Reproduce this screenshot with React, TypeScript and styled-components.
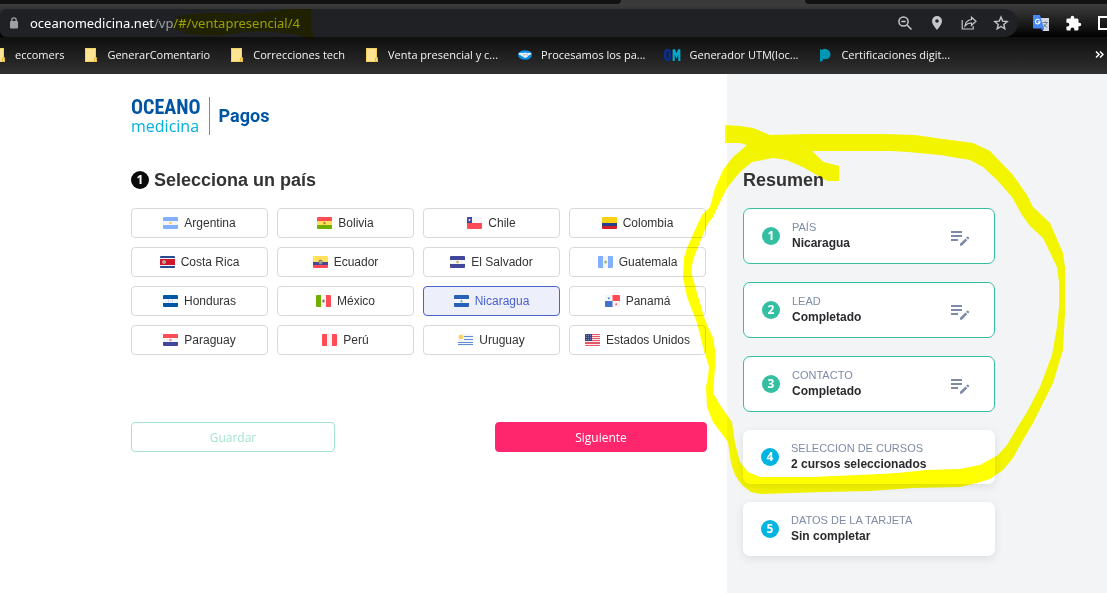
import React from 'react';
import styled, { createGlobalStyle } from 'styled-components';

const GlobalStyle = createGlobalStyle`
  * { box-sizing: border-box; }
  body {
    margin: 0;
    background: #fff;
    color: #333;
    font: 12px/16px "Liberation Sans", Arial, sans-serif;
  }
  button { font: inherit; cursor: pointer; }
  h1, h2, p { margin: 0; }
`;

const UI_FONT = '"Open Sans", "Noto Sans", sans-serif';

const Page = styled.div`
  position: relative;
  min-height: 100vh;
  display: flex;
  flex-direction: column;
  overflow: hidden;
`;

/* ---------- browser chrome ---------- */

const Chrome = styled.header`
  font-family: ${UI_FONT};
  color: #e8eaed;
`;

const TabStrip = styled.div`
  display: flex;
  height: 4px;
  background: #3a3a3a;
`;

const TabsBefore = styled.div`
  flex: 0 0 621px;
  background: #121212;
  border-bottom-right-radius: 4px;
`;

const TabsAfter = styled.div`
  flex: 1;
  margin-left: 184px;
  background: #121212;
  border-bottom-left-radius: 4px;
`;

const Toolbar = styled.div`
  display: flex;
  align-items: center;
  height: 33px;
  padding-top: 5px;
  background: linear-gradient(#3c3c3c, #2c2c2c 30%, #0a0a0a 85%, #000);
`;

const AddressBar = styled.div`
  flex: 1;
  display: flex;
  align-items: center;
  height: 28px;
  padding: 0 1px 0 10px;
  background: #202124;
  border-radius: 6px 14px 14px 6px;
`;

const Url = styled.div`
  flex: 1;
  margin-left: 12px;
  font: 13px/18px "Noto Sans", sans-serif;
  color: #9aa0a6;
  b { font-weight: 400; color: #fff; }
`;

const IconButton = styled.button`
  flex: none;
  display: flex;
  align-items: center;
  justify-content: center;
  width: 32px;
  height: 28px;
  padding: 0;
  border: 0;
  background: none;
  color: #c4c7c9;
`;

const BarIcons = styled.div`
  display: flex;
`;

const Extensions = styled.div`
  display: flex;
  width: 89px;
  padding-left: 7px;
  overflow: hidden;
`;

const Bookmarks = styled.nav`
  display: flex;
  align-items: center;
  height: 37px;
  padding-bottom: 2px;
  background: linear-gradient(#0f0f0f, #303030);
  overflow: hidden;
`;

const BookmarkList = styled.div`
  flex: 1;
  display: flex;
  gap: 19px;
  margin-left: -9px;
`;

const Bookmark = styled.a`
  display: flex;
  align-items: center;
  gap: 8px;
  font-size: 11px;
  color: #f1f3f4;
  text-decoration: none;
  white-space: nowrap;
  svg { flex: none; }
`;

const More = styled.button`
  padding: 0 3px;
  border: 0;
  background: none;
  color: #fff;
  display: flex;
`;

/* ---------- page ---------- */

const Body = styled.div`
  flex: 1;
  display: flex;
`;

const Main = styled.main`
  flex: 1;
  padding: 20px 20px 20px 16px;
`;

const Content = styled.div`
  max-width: 576px;
  margin-left: auto;
`;

const Brand = styled.div`
  display: flex;
  align-items: center;
  height: 44px;
`;

const Logo = styled.div`
  display: flex;
  flex-direction: column;
  height: 38px;
  padding-right: 8px;
  border-right: 1px solid #8a8a8a;
`;

const LogoTop = styled.span`
  font: 700 20px/20px "Roboto Condensed", "Liberation Sans Narrow", "Liberation Sans", sans-serif;
  color: #0054a4;
`;

const LogoBottom = styled.span`
  font: 500 16px/18px "Open Sans", "Noto Sans", sans-serif;
  color: #00b2dc;
`;

const Product = styled.span`
  margin-left: 9px;
  font: 700 18px/24px Roboto, sans-serif;
  color: #0054a4;
`;

const Title = styled.h1`
  display: flex;
  align-items: center;
  gap: 5px;
  margin: 30px 0 16px;
  font-size: 18px;
  line-height: 24px;
`;

const Badge = styled.span<{ $color: string }>`
  flex: none;
  width: 18px;
  height: 18px;
  border-radius: 50%;
  background: ${(p) => p.$color};
  color: #fff;
  font: 700 12px/18px ${UI_FONT};
  text-align: center;
`;

const CountryGrid = styled.div`
  display: grid;
  grid-template-columns: repeat(4, 1fr);
  gap: 9px;
  max-width: 575px;
`;

const CountryButton = styled.button<{ $selected?: boolean }>`
  display: flex;
  align-items: center;
  justify-content: center;
  gap: 6px;
  height: 30px;
  padding: 0;
  border: 1px solid ${(p) => (p.$selected ? '#4a62cc' : '#d9d9d9')};
  border-radius: 4px;
  background: ${(p) => (p.$selected ? '#edf0fa' : '#fff')};
  color: ${(p) => (p.$selected ? '#4a62cc' : '#333')};
`;

const Actions = styled.div`
  display: flex;
  justify-content: space-between;
  margin-top: 67px;
`;

const ActionButton = styled.button<{ $primary?: boolean }>`
  width: ${(p) => (p.$primary ? '212px' : '204px')};
  height: 30px;
  padding: 1px 0 0;
  border: 1px solid ${(p) => (p.$primary ? '#ff266e' : '#a3e4cf')};
  border-radius: 4px;
  background: ${(p) => (p.$primary ? '#ff266e' : '#fff')};
  color: ${(p) => (p.$primary ? '#fff' : '#a3e4cf')};
  font-family: ${UI_FONT};
`;

const Aside = styled.aside`
  flex: 0 0 380px;
  padding: 94px 16px 20px;
  background: #f3f4f6;
`;

const AsideTitle = styled.h2`
  margin-bottom: 16px;
  font-size: 18px;
  line-height: 24px;
`;

const Steps = styled.div`
  display: flex;
  flex-direction: column;
  gap: 18px;
  width: 252px;
`;

const Step = styled.section<{ $done: boolean }>`
  display: flex;
  align-items: center;
  height: ${(p) => (p.$done ? '56px' : '54px')};
  padding: 0 ${(p) => (p.$done ? '16px' : '18px')} 0 18px;
  border-radius: 7px;
  background: #fff;
  ${(p) => (p.$done ? 'border: 1px solid #34bfa3;' : 'box-shadow: 0 3px 10px rgba(0, 0, 0, 0.09);')}
`;

const StepText = styled.div`
  flex: 1;
  margin-left: 12px;
  padding-bottom: 2px;
`;

const StepLabel = styled.p`
  font-size: 11px;
  line-height: 16px;
  color: #7e8ba5;
`;

const StepValue = styled.p`
  font-weight: 700;
  line-height: 16px;
  color: #2b2b2f;
`;

const EditButton = styled.button`
  display: flex;
  padding: 6px 8px 0;
  border: 0;
  background: none;
`;

const Marker = styled.svg<{ $side: 'left' | 'right'; $top: number }>`
  position: absolute;
  top: ${(p) => p.$top}px;
  ${(p) => p.$side}: 0;
  mix-blend-mode: multiply;
  pointer-events: none;
`;

/* ---------- drawings ---------- */

const Folder = () => (
  <svg width="16" height="16" viewBox="0 0 16 16">
    <path d="M2 1h11v9.500h1V15H2z" fill="#ffe494" />
    <path d="M2.500 1.500h10V11M2.500 1.500v13H11" fill="none" stroke="#f3cf5c" />
    <path d="M11.500 14.500v-3.500h2v3.500z" fill="#ffe494" stroke="#e9bb3c" />
  </svg>
);

const Handshake = () => (
  <svg width="16" height="16" viewBox="0 0 16 16">
    <ellipse cx="8" cy="8" rx="7" ry="4.800" fill="#0a8de0" />
    <path d="M1.500 6.200Q4 5.500 6 6l2-.6 2.500.6q2-.5 4 0-.5 1.800-2.500 2.300l-2 2L8 11l-2.500-1.500L3.500 8.300Q2 8 1.500 6.200z" fill="#e8f0fb" />
    <path d="M6 7.500l1.500.6 1.500-.8 2 1.200" fill="none" stroke="#8a94c4" strokeWidth=".6" />
  </svg>
);

const OmIcon = () => (
  <svg width="17" height="16" viewBox="0 0 17 16">
    <rect x="1.300" y="3.200" width="4.400" height="9.600" rx="2" fill="none" stroke="#0b2f91" strokeWidth="2.400" />
    <path d="M9.700 14V2.500L12.500 9l2.800-6.500V14" fill="none" stroke="#04a9cc" strokeWidth="2.200" />
  </svg>
);

const PIcon = () => (
  <svg width="16" height="16" viewBox="0 0 16 16">
    <path d="M3 2l2 1q2-2 5-.8Q13.500 4 13.500 7.500 13 12 9 12.200l-3-.2v1.500L3 15z" fill="#0097b2" />
  </svg>
);

const LockIcon = () => (
  <svg width="8" height="12" viewBox="0 0 8 12">
    <rect y="4" width="8" height="7.500" rx="1" fill="#9aa0a6" />
    <path d="M1.800 5V3a2.200 2.200 0 0 1 4.400 0v2" fill="none" stroke="#9aa0a6" strokeWidth="1.300" />
  </svg>
);

const ZoomOutIcon = () => (
  <svg width="16" height="16" viewBox="0 0 16 16" fill="none" stroke="currentColor" strokeWidth="1.500">
    <circle cx="6.500" cy="6.500" r="4.600" />
    <path d="M10 10l4.500 4.500M4.300 6.500h4.400" />
  </svg>
);

const PinIcon = () => (
  <svg width="16" height="16" viewBox="0 0 16 16">
    <path fillRule="evenodd" d="M8 1a5 5 0 0 0-5 5c0 3.600 5 9 5 9s5-5.400 5-9a5 5 0 0 0-5-5zm0 3.200a1.800 1.800 0 1 1 0 3.600 1.800 1.800 0 0 1 0-3.600z" fill="currentColor" />
  </svg>
);

const ShareIcon = () => (
  <svg width="16" height="16" viewBox="0 0 16 16" fill="none" stroke="currentColor" strokeWidth="1.200">
    <path d="M1.200 5v9h11v-3" />
    <path d="M10.500 2.200L15 6.300l-4.500 4V8Q6.500 7.800 4 11q.5-5.600 6.500-6.500z" />
  </svg>
);

const StarIcon = () => (
  <svg width="16" height="16" viewBox="0 0 16 16" fill="none" stroke="currentColor" strokeWidth="1.400">
    <path d="M8 2l1.700 4.100 4.500.4-3.400 2.900 1 4.400L8 11.500l-3.800 2.300 1-4.400L1.800 6.500l4.500-.4z" />
  </svg>
);

const TranslateIcon = () => (
  <svg width="16" height="16" viewBox="0 0 16 16">
    <path d="M6 3h10v13h-6z" fill="#d5d8dc" />
    <path d="M9.500 7.500h5.500M12.200 6.300v1.200M14 7.500q-.8 3-4 5M10.800 9q1 2.500 3.600 3.500" fill="none" stroke="#5f7f9c" strokeWidth=".9" />
    <path d="M0 0h7l4 13.500H1q-1 0-1-1z" fill="#4687f2" />
    <path d="M7.200 13.500h4L9.600 16z" fill="#2b5bc0" />
    <path d="M6.600 5.200A2.300 2.300 0 1 0 7 6.900H4.900" fill="none" stroke="#fff" strokeWidth="1.100" />
  </svg>
);

const PuzzleIcon = () => (
  <svg width="17" height="17" viewBox="0 0 24 24">
    <path d="M20.500 11H19V7a2 2 0 0 0-2-2h-4V3.500a2.500 2.500 0 0 0-5 0V5H4a2 2 0 0 0-2 2v3.800h1.500a2.700 2.700 0 0 1 0 5.400H2V20a2 2 0 0 0 2 2h3.800v-1.500a2.700 2.700 0 0 1 5.400 0V22H17a2 2 0 0 0 2-2v-4h1.500a2.500 2.500 0 0 0 0-5z" fill="#fff" />
  </svg>
);

const SquareIcon = () => (
  <svg width="16" height="16" viewBox="0 0 16 16">
    <rect x="2" y="2" width="12" height="12" fill="none" stroke="#fff" strokeWidth="2" />
  </svg>
);

const ChevronsIcon = () => (
  <svg width="9" height="9" viewBox="0 0 9 9" fill="none" stroke="currentColor" strokeWidth="1.500">
    <path d="M1 1.500l3 3-3 3M5 1.500l3 3-3 3" />
  </svg>
);

const EditIcon = () => (
  <svg width="20" height="18" viewBox="0 0 20 18">
    <path d="M1 2h11M1 6h11M1 10h7" stroke="#7e8ba5" strokeWidth="2" />
    <path d="M10 13.800L15.400 8.400l1.900 1.900L11.900 15.700H10zM16.100 7.700l1-1q.5-.5 1 0l.9.900q.5.500 0 1l-1 1z" fill="#7e8ba5" />
  </svg>
);

const bands = (colors: string[], sizes: number[]) => {
  let y = 0;
  return colors.map((fill, i) => {
    const top = y;
    y += sizes[i];
    return <rect key={i} y={top} width="15" height={sizes[i]} fill={fill} />;
  });
};

const columns = (colors: string[]) =>
  colors.map((fill, i) => <rect key={i} x={i * 5} width="5" height="12" fill={fill} />);

const thirds = [4, 4, 4];

const flags: Record<string, React.ReactNode> = {
  Argentina: <>{bands(['#82b0ff', '#f5f5f5', '#82b0ff'], thirds)}<circle cx="7.500" cy="6" r="1.200" fill="#ffc855" /></>,
  Bolivia: <>{bands(['#ff4b55', '#ffe15a', '#73af00'], thirds)}<circle cx="7.500" cy="6" r="1.300" fill="#b98a4e" /></>,
  Chile: <>{bands(['#f5f5f5', '#ff4b55'], [6, 6])}<rect width="5" height="6" fill="#41479b" /><circle cx="2.500" cy="3" r="1" fill="#f5f5f5" /></>,
  Colombia: bands(['#fbd116', '#22408c', '#ce2028'], [6, 3, 3]),
  'Costa Rica': <>{bands(['#2a4a94', '#f5f5f5', '#d0182c', '#f5f5f5', '#2a4a94'], [2, 1, 6, 1, 2])}<ellipse cx="4" cy="6" rx="1.800" ry="1.800" fill="#e6e0d2" /><circle cx="4" cy="6" r=".9" fill="#6f9a70" /></>,
  Ecuador: <>{bands(['#ffe15a', '#41479b', '#ff4b55'], [6, 3, 3])}<ellipse cx="7.500" cy="6" rx="2.200" ry="2.500" fill="#9c8456" /><circle cx="7.500" cy="6" r="1.200" fill="#7fb3d0" /></>,
  'El Salvador': <>{bands(['#41479b', '#f5f5f5', '#41479b'], thirds)}<circle cx="7.500" cy="6" r="1.300" fill="#c9b458" /></>,
  Guatemala: <>{columns(['#82b0ff', '#f5f5f5', '#82b0ff'])}<circle cx="7.500" cy="6" r="1.500" fill="#9cb87a" /></>,
  Honduras: <>{bands(['#0057a8', '#f5f5f5', '#0057a8'], thirds)}<path d="M5 5.200h1M9 5.200h1M7 6h1M5 6.900h1M9 6.900h1" stroke="#9cbce0" strokeWidth=".8" /></>,
  México: <>{columns(['#73af00', '#f5f5f5', '#ff4b55'])}<ellipse cx="7.500" cy="6" rx="1.200" ry="1.500" fill="#8a6a4a" /></>,
  Nicaragua: <>{bands(['#2862b8', '#f5f5f5', '#2862b8'], thirds)}<path d="M7.500 4.500L9 7.300H6z" fill="#73b39a" /></>,
  Panamá: (
    <>
      <rect width="15" height="12" fill="#f5f5f5" />
      <rect x="7.500" width="7.500" height="6" fill="#ff4b55" />
      <rect y="6" width="7.500" height="6" fill="#4173cd" />
      <path d="M3.800 1.800l.4 1h1l-.8.700.3 1-.9-.6-.9.600.3-1-.8-.7h1z" fill="#4173cd" />
      <path d="M11.200 7.800l.4 1h1l-.8.700.3 1-.9-.6-.9.600.3-1-.8-.7h1z" fill="#ff4b55" />
    </>
  ),
  Paraguay: <>{bands(['#ff4b55', '#f5f5f5', '#41479b'], thirds)}<circle cx="7.500" cy="6" r="1.200" fill="#c99a8a" /></>,
  Perú: columns(['#ff4b55', '#f5f5f5', '#ff4b55']),
  Uruguay: (
    <>
      {bands(['#f5f5f5', '#5d8fd8', '#f5f5f5', '#5d8fd8', '#f5f5f5', '#5d8fd8', '#f5f5f5', '#5d8fd8', '#f5f5f5'], [2, 1, 2, 1, 2, 1, 1, 1, 1])}
      <rect width="6" height="6" fill="#f5f5f5" />
      <circle cx="3" cy="3" r="2.300" fill="#ffd05c" />
    </>
  ),
  'Estados Unidos': (
    <>
      {bands(['#e2566a', '#f8e8ea', '#e2566a', '#f8e8ea', '#e2566a', '#f8e8ea', '#e2566a', '#f8e8ea', '#e2566a', '#f8e8ea', '#e2566a'], [1, 1, 1, 1, 1, 1, 1, 1, 2, 1, 1])}
      <rect width="7" height="7" fill="#3d4484" />
      <path d="M1 1.500h6M1 3.500h6M1 5.500h6" stroke="#9a9ec4" strokeWidth=".7" strokeDasharray="1 1" />
    </>
  ),
};

const Flag = ({ name }: { name: string }) => (
  <svg width="15" height="12" viewBox="0 0 15 12" aria-hidden="true">
    <clipPath id={`flag-${name.replace(' ', '-')}`}>
      <rect width="15" height="12" rx="1" />
    </clipPath>
    <g clipPath={`url(#flag-${name.replace(' ', '-')})`}>{flags[name]}</g>
  </svg>
);

const LOOP_OUTLINE = `
  M725 125 L740 126 L753 128 L770 135 L807 134 L885 134 L915 135 L943 139 L973 143 L990 151
  L1013 175 L1027 195 L1033 207 L1050 223 L1063 253 L1065 267 L1065 313 L1063 350 L1053 383
  L1033 423 L1023 440 L1013 458 L1003 470 L990 479 L977 483 L960 487 L913 488 L870 491
  L823 492 L760 494 L751 492 L742 485 L735 475 L731 463 L728 442 L713 422 L707 407 L706 387
  L708 377 L709 367 L703 347 L697 323 L687 297 L683 278 L684 258 L687 248 L695 230 L702 215
  L710 207 L715 188 L723 170 L733 157 L747 145 L740 143 L725 143 Z`;

const LOOP_INSIDE = `
  M812 151 L823 162 L839 166 L839 181 L828 181 L822 178 L803 167 L787 160 L773 158 L752 162
  L740 172 L727 188 L720 202 L713 217 L707 225 L700 242 L693 260 L691 272 L697 293 L705 320
  L713 338 L715 350 L715 367 L713 393 L720 405 L732 422 L735 443 L740 462 L748 472 L760 477
  L813 477 L880 474 L897 473 L927 470 L960 469 L980 465 L998 455 L1007 445 L1017 428
  L1027 412 L1040 387 L1052 355 L1057 327 L1059 307 L1059 282 L1057 267 L1043 238 L1030 226
  L1022 215 L1012 197 L997 180 L983 167 L970 160 L940 155 L908 152 L890 151 Z`;

/* ---------- data ---------- */

const bookmarks = [
  { label: 'eccomers', icon: <Folder /> },
  { label: 'GenerarComentario', icon: <Folder /> },
  { label: 'Correcciones tech', icon: <Folder /> },
  { label: 'Venta presencial y c...', icon: <Folder /> },
  { label: 'Procesamos los pa...', icon: <Handshake /> },
  { label: 'Generador UTM(loc...', icon: <OmIcon /> },
  { label: 'Certificaciones digit...', icon: <PIcon /> },
];

const steps = [
  { label: 'PAÍS', value: 'Nicaragua', done: true },
  { label: 'LEAD', value: 'Completado', done: true },
  { label: 'CONTACTO', value: 'Completado', done: true },
  { label: 'SELECCION DE CURSOS', value: '2 cursos seleccionados', done: false },
  { label: 'DATOS DE LA TARJETA', value: 'Sin completar', done: false },
];

export default function App() {
  const [country, setCountry] = React.useState('Nicaragua');
  return (
    <Page>
      <GlobalStyle />
      <Chrome>
        <TabStrip>
          <TabsBefore />
          <TabsAfter />
        </TabStrip>
        <Toolbar>
          <AddressBar>
            <LockIcon />
            <Url><b>oceanomedicina.net</b>/vp/#/ventapresencial/4</Url>
            <BarIcons>
              <IconButton aria-label="Zoom"><ZoomOutIcon /></IconButton>
              <IconButton aria-label="Ubicación"><PinIcon /></IconButton>
              <IconButton aria-label="Compartir"><ShareIcon /></IconButton>
              <IconButton aria-label="Favorito"><StarIcon /></IconButton>
            </BarIcons>
          </AddressBar>
          <Extensions>
            <IconButton aria-label="Traducir"><TranslateIcon /></IconButton>
            <IconButton aria-label="Extensiones"><PuzzleIcon /></IconButton>
            <IconButton aria-label="Panel lateral"><SquareIcon /></IconButton>
          </Extensions>
        </Toolbar>
        <Bookmarks>
          <BookmarkList>
            {bookmarks.map((b) => (
              <Bookmark key={b.label} href="#">{b.icon}{b.label}</Bookmark>
            ))}
          </BookmarkList>
          <More aria-label="Más marcadores"><ChevronsIcon /></More>
        </Bookmarks>
      </Chrome>

      <Body>
        <Main>
          <Content>
            <Brand>
              <Logo>
                <LogoTop>OCEANO</LogoTop>
                <LogoBottom>medicina</LogoBottom>
              </Logo>
              <Product>Pagos</Product>
            </Brand>
            <Title><Badge $color="#0a0a0a">1</Badge>Selecciona un país</Title>
            <CountryGrid>
              {Object.keys(flags).map((name) => (
                <CountryButton
                  key={name}
                  $selected={name === country}
                  aria-pressed={name === country}
                  onClick={() => setCountry(name)}
                >
                  <Flag name={name} />
                  {name}
                </CountryButton>
              ))}
            </CountryGrid>
            <Actions>
              <ActionButton>Guardar</ActionButton>
              <ActionButton $primary>Siguiente</ActionButton>
            </Actions>
          </Content>
        </Main>
        <Aside>
          <AsideTitle>Resumen</AsideTitle>
          <Steps>
            {steps.map((s, i) => (
              <Step key={s.label} $done={s.done}>
                <Badge $color={s.done ? '#34bfa3' : '#00b5e2'}>{i + 1}</Badge>
                <StepText>
                  <StepLabel>{s.label}</StepLabel>
                  <StepValue>{s.value}</StepValue>
                </StepText>
                {s.done && <EditButton aria-label={`Editar ${s.label}`}><EditIcon /></EditButton>}
              </Step>
            ))}
          </Steps>
        </Aside>
      </Body>

      <Marker $side="left" $top={0} width="320" height="50" viewBox="0 0 320 50" aria-hidden="true">
        <path d="M178 16Q205 11 245 14L292 9H311V25L314 41L300 35Q270 30 245 32Q215 37 190 34Q174 31 173 24Z" fill="#ff0" />
      </Marker>
      <Marker $side="right" $top={110} width="430" height="400" viewBox="677 110 430 400" aria-hidden="true">
        <path fillRule="evenodd" fill="#ff0" d={LOOP_OUTLINE + LOOP_INSIDE} />
        <path fill="#ff0" d="M770 140L812 151L823 162L839 166V181H828L803 167L787 160Z" />
      </Marker>
    </Page>
  );
}
